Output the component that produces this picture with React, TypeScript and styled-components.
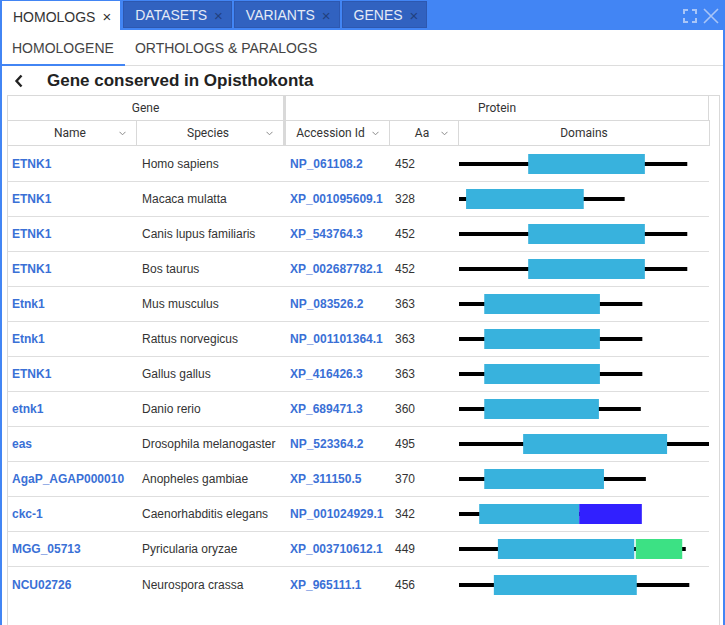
import React from 'react';
import styled, { createGlobalStyle } from 'styled-components';

const GlobalStyle = createGlobalStyle`
  html, body {
    margin: 0;
    padding: 0;
    background: #fff;
  }
  body {
    font-family: "Liberation Sans", Arial, sans-serif;
    color: #333;
  }
`;

const Panel = styled.div`
  width: 725px;
  height: 625px;
  box-sizing: border-box;
  border-left: 2px solid #4285f4;
  border-right: 2px solid #4285f4;
  display: flex;
  flex-direction: column;
  overflow: hidden;
`;

const TabBar = styled.div`
  height: 30px;
  flex: none;
  background: #4285f4;
  display: flex;
  align-items: flex-start;
  padding-top: 1px;
  box-sizing: border-box;
  margin-left: -2px;
  margin-right: -2px;
  padding-left: 2px;
`;

const Tab = styled.div<{ $active?: boolean }>`
  height: ${(p) => (p.$active ? '29px' : '27px')};
  box-sizing: border-box;
  display: flex;
  align-items: center;
  padding: 1px 8px 0 ${(p) => (p.$active ? '10px' : '11px')};
  margin-right: ${(p) => (p.$active ? '3px' : '2px')};
  font-size: 14px;
  background: ${(p) => (p.$active ? '#fff' : '#3162c0')};
  border: 1px solid ${(p) => (p.$active ? '#fff' : '#2d58b0')};
  border-bottom: ${(p) => (p.$active ? 'none' : '1px solid #2d58b0')};
  color: ${(p) => (p.$active ? '#333' : '#e4eaf6')};
  gap: 7px;
`;

const TabClose = styled.span<{ $active?: boolean }>`
  font-size: 15px;
  line-height: 1;
  color: ${(p) => (p.$active ? '#333' : '#21407e')};
`;

const WindowIcons = styled.div`
  margin-left: auto;
  display: flex;
  align-items: center;
  gap: 6px;
  height: 29px;
  padding-right: 6px;
`;

const SubTabs = styled.div`
  height: 36px;
  flex: none;
  box-sizing: border-box;
  display: flex;
  border-bottom: 1px solid #ddd;
`;

const SubTab = styled.div<{ $active?: boolean }>`
  display: flex;
  align-items: center;
  padding: 2px 10px 0;
  font-size: 14px;
  color: #444;
  margin-bottom: -1px;
  border-bottom: 2px solid ${(p) => (p.$active ? '#4285f4' : 'transparent')};
  &:first-child {
    padding-left: 10px;
    padding-right: 11px;
  }
`;

const TitleRow = styled.div`
  height: 29px;
  flex: none;
  display: flex;
  align-items: center;
  padding-left: 12px;
  gap: 23px;
`;

const Title = styled.h2`
  margin: 0;
  font-size: 17px;
  font-weight: bold;
  color: #222;
  padding-top: 1px;
`;

const Grid = styled.div`
  margin-left: 5px;
  width: 713px;
  flex: 1;
  box-sizing: border-box;
  border: 1px solid #d9d9d9;
  border-bottom: none;
  overflow: hidden;
`;

const COLS = '129px 149px 104px 69px 250px';

const HeaderRow = styled.div`
  display: grid;
  grid-template-columns: 278px 423px;
  width: 702px;
  height: 24px;
  border-bottom: 1px solid #d9d9d9;
  font-family: Roboto, "Liberation Sans", sans-serif;
  font-size: 12px;
  color: #333;
`;

const ColumnRow = styled(HeaderRow)`
  grid-template-columns: ${COLS} 1px;
  height: 24px;
`;

const HeadCell = styled.div<{ $thick?: boolean; $last?: boolean; $padRight?: number }>`
  position: relative;
  display: flex;
  align-items: center;
  justify-content: center;
  padding-right: ${(p) => (p.$last ? 0 : p.$padRight ?? 4)}px;
  border-right: ${(p) => (p.$thick ? '3px' : p.$last ? '0' : '1px')} solid #d9d9d9;
`;

const GroupCell = styled.div<{ $thick?: boolean }>`
  display: flex;
  align-items: center;
  justify-content: center;
  border-right: ${(p) => (p.$thick ? '3px' : '1px')} solid #d9d9d9;
`;

const EndBorder = styled.div`
  background: #d9d9d9;
`;

const Sort = styled.svg`
  position: absolute;
  right: 10px;
  top: 10px;
`;

const Body = styled.div`
  padding-top: 1px;
`;

const DataRow = styled.div`
  display: grid;
  grid-template-columns: ${COLS};
  width: 701px;
  height: 35px;
  box-sizing: border-box;
  border-bottom: 1px solid #dedede;
  font-size: 12px;
  align-items: center;
  &:last-child {
    border-bottom: none;
  }
`;

const Cell = styled.div<{ $link?: boolean; $pad?: number }>`
  padding-left: ${(p) => p.$pad ?? 5}px;
  white-space: nowrap;
  overflow: hidden;
  color: ${(p) => (p.$link ? '#3a70d6' : '#333')};
  font-weight: ${(p) => (p.$link ? 'bold' : 'normal')};
`;

const DomainCell = styled.div`
  height: 34px;
`;

type Domain = { from: number; to: number; color: string };
type Homolog = { name: string; species: string; acc: string; aa: number; domains: Domain[] };

const BLUE = '#38b2dd';

const rows: Homolog[] = [
  { name: 'ETNK1', species: 'Homo sapiens', acc: 'NP_061108.2', aa: 452, domains: [{ from: 137, to: 368, color: BLUE }] },
  { name: 'ETNK1', species: 'Macaca mulatta', acc: 'XP_001095609.1', aa: 328, domains: [{ from: 14, to: 247, color: BLUE }] },
  { name: 'ETNK1', species: 'Canis lupus familiaris', acc: 'XP_543764.3', aa: 452, domains: [{ from: 137, to: 368, color: BLUE }] },
  { name: 'ETNK1', species: 'Bos taurus', acc: 'XP_002687782.1', aa: 452, domains: [{ from: 137, to: 368, color: BLUE }] },
  { name: 'Etnk1', species: 'Mus musculus', acc: 'NP_083526.2', aa: 363, domains: [{ from: 50, to: 279, color: BLUE }] },
  { name: 'Etnk1', species: 'Rattus norvegicus', acc: 'NP_001101364.1', aa: 363, domains: [{ from: 50, to: 279, color: BLUE }] },
  { name: 'ETNK1', species: 'Gallus gallus', acc: 'XP_416426.3', aa: 363, domains: [{ from: 50, to: 279, color: BLUE }] },
  { name: 'etnk1', species: 'Danio rerio', acc: 'XP_689471.3', aa: 360, domains: [{ from: 50, to: 277, color: BLUE }] },
  { name: 'eas', species: 'Drosophila melanogaster', acc: 'NP_523364.2', aa: 495, domains: [{ from: 127, to: 412, color: BLUE }] },
  { name: 'AgaP_AGAP000010', species: 'Anopheles gambiae', acc: 'XP_311150.5', aa: 370, domains: [{ from: 50, to: 287, color: BLUE }] },
  {
    name: 'ckc-1', species: 'Caenorhabditis elegans', acc: 'NP_001024929.1', aa: 342,
    domains: [{ from: 40, to: 238, color: BLUE }, { from: 238, to: 362, color: '#3120ff' }],
  },
  {
    name: 'MGG_05713', species: 'Pyricularia oryzae', acc: 'XP_003710612.1', aa: 449,
    domains: [{ from: 77, to: 347, color: BLUE }, { from: 350, to: 442, color: '#3ce184' }],
  },
  { name: 'NCU02726', species: 'Neurospora crassa', acc: 'XP_965111.1', aa: 456, domains: [{ from: 69, to: 352, color: BLUE }] },
];

// 495 aa (the longest protein) fills the 250px domains column
const SCALE = 250 / 495;

const DomainTrack: React.FC<{ aa: number; domains: Domain[] }> = ({ aa, domains }) => (
  <svg width={250} height={34} style={{ display: 'block' }}>
    <rect x={0} y={15} width={aa * SCALE} height={4} fill="#000" />
    {domains.map((d, i) => (
      <rect key={i} x={d.from * SCALE} y={7} width={(d.to - d.from) * SCALE} height={20} fill={d.color} />
    ))}
  </svg>
);

const Chevron = () => (
  <Sort width={7} height={5} viewBox="0 0 7 5">
    <polyline points="0.5,0.8 3.5,3.8 6.5,0.8" fill="none" stroke="#8a8a8a" strokeWidth={1} />
  </Sort>
);

const App: React.FC = () => {
  const tabs = ['HOMOLOGS', 'DATASETS', 'VARIANTS', 'GENES'];

  return (
    <>
      <GlobalStyle />
      <Panel>
        <TabBar>
          {tabs.map((t, i) => (
            <Tab key={t} $active={i === 0}>
              {t}
              <TabClose $active={i === 0}>×</TabClose>
            </Tab>
          ))}
          <WindowIcons>
            <svg width={14} height={14} viewBox="0 0 14 14" fill="none" stroke="#a9c5f7" strokeWidth={2}>
              <path d="M1 5V1h4M9 1h4v4M13 9v4H9M5 13H1V9" />
            </svg>
            <svg width={16} height={16} viewBox="0 0 16 16" fill="none" stroke="#a9c5f7" strokeWidth={1.6}>
              <path d="M1 1l14 14M15 1L1 15" />
            </svg>
          </WindowIcons>
        </TabBar>

        <SubTabs>
          <SubTab $active>HOMOLOGENE</SubTab>
          <SubTab>ORTHOLOGS &amp; PARALOGS</SubTab>
        </SubTabs>

        <TitleRow>
          <svg width={10} height={14} viewBox="0 0 10 14" fill="none" stroke="#222" strokeWidth={2.4}>
            <path d="M7.5 1.5L2.5 7l5 5.5" />
          </svg>
          <Title>Gene conserved in Opisthokonta</Title>
        </TitleRow>

        <Grid>
          <HeaderRow>
            <GroupCell $thick>Gene</GroupCell>
            <GroupCell>Protein</GroupCell>
          </HeaderRow>
          <ColumnRow>
            <HeadCell>Name<Chevron /></HeadCell>
            <HeadCell $thick>Species<Chevron /></HeadCell>
            <HeadCell $padRight={14}>Accession Id<Chevron /></HeadCell>
            <HeadCell>Aa<Chevron /></HeadCell>
            <HeadCell $last>Domains</HeadCell>
            <EndBorder />
          </ColumnRow>

          <Body>
            {rows.map((r) => (
              <DataRow key={r.acc}>
                <Cell $link $pad={4}>{r.name}</Cell>
                <Cell $pad={5}>{r.species}</Cell>
                <Cell $link $pad={4}>{r.acc}</Cell>
                <Cell $pad={5}>{r.aa}</Cell>
                <DomainCell>
                  <DomainTrack aa={r.aa} domains={r.domains} />
                </DomainCell>
              </DataRow>
            ))}
          </Body>
        </Grid>
      </Panel>
    </>
  );
};

export default App;
